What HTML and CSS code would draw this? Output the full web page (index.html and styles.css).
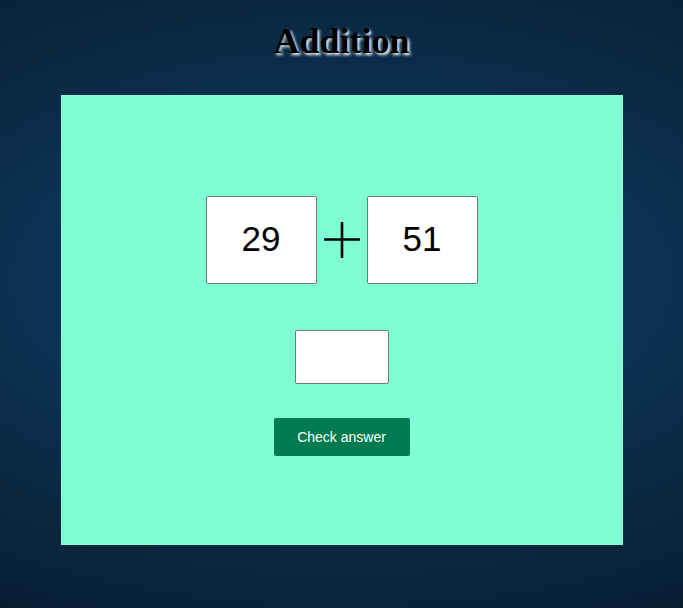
FILE: index.html
```html
<!DOCTYPE html>
<html lang="en">
<head>
  <meta charset="utf-8">
  <meta name="viewport" content="width=device-width, initial-scale=1">
  <title>Addition</title>
  <link rel="stylesheet" href="styles.css">
</head>
<body>
  <h1 class="title">Addition</h1>
  <main>
    <form class="card">
      <div class="sum">
        <input class="number" type="text" value="29" aria-label="First number" readonly>
        <svg class="plus" viewBox="0 0 36 36" aria-hidden="true">
          <path d="M18 0V36M0 17.5H36"/>
        </svg>
        <input class="number" type="text" value="51" aria-label="Second number" readonly>
      </div>
      <input class="answer" type="text" aria-label="Your answer">
      <button class="check" type="button">Check answer</button>
    </form>
  </main>
</body>
</html>
```

FILE: styles.css
```css
* {
  box-sizing: border-box;
}

body {
  min-height: 100vh;
  margin: 0;
  padding: 21px 8px;
  background: radial-gradient(90% 54% at 50% 46%, #0e3559 0%, #0c3153 52%, #09273e 86%, #082338 102%, #051a2e 120%);
}

.title {
  margin: 0 0 33px;
  color: #000;
  font: bold 36px/41px "Liberation Serif", "Times New Roman", serif;
  text-align: center;
  text-shadow: 2px 2px 3px #fff;
}

.card {
  display: flex;
  flex-direction: column;
  align-items: center;
  width: 100%;
  max-width: 562px;
  min-height: 450px;
  margin: 0 auto;
  padding: 101px 16px 88px;
  background: #7fffd4;
}

.sum {
  display: flex;
  align-items: center;
  gap: 7px;
  margin-bottom: 46px;
}

.number,
.answer {
  padding: 0 0 2px;
  border: 1px solid #767676;
  border-radius: 2px;
  background: #fff;
  color: #000;
  font: 35px "Liberation Sans", Arial, sans-serif;
  text-align: center;
}

.number {
  width: 111px;
  height: 88px;
}

.answer {
  width: 94px;
  height: 54px;
  margin-bottom: 34px;
}

.plus {
  width: 36px;
  height: 36px;
  fill: none;
  stroke: #000;
  stroke-width: 2.6;
}

.check {
  min-width: 136px;
  padding: 11px 22px;
  border: 0;
  border-radius: 2px;
  background: #007a50;
  color: #fff;
  font: 14px/16px "Liberation Sans", Arial, sans-serif;
  cursor: pointer;
}
```
